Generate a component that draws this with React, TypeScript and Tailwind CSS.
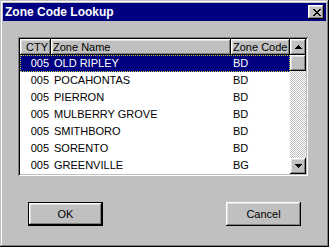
import React from "react";

const rows: [string, string, string][] = [
  ["005", "OLD RIPLEY", "BD"],
  ["005", "POCAHONTAS", "BD"],
  ["005", "PIERRON", "BD"],
  ["005", "MULBERRY GROVE", "BD"],
  ["005", "SMITHBORO", "BD"],
  ["005", "SORENTO", "BD"],
  ["005", "GREENVILLE", "BG"],
];

const raised =
  "bg-[#c0c0c0] shadow-[inset_-1px_-1px_0_#000,inset_1px_1px_0_#fff,inset_-2px_-2px_0_#808080,inset_2px_2px_0_#dfdfdf]";

function Arrow({ up }: { up: boolean }) {
  return (
    <svg width="7" height="4" viewBox="0 0 7 4" shapeRendering="crispEdges">
      {up ? (
        <>
          <rect x="3" y="0" width="1" height="1" fill="#000" />
          <rect x="2" y="1" width="3" height="1" fill="#000" />
          <rect x="1" y="2" width="5" height="1" fill="#000" />
          <rect x="0" y="3" width="7" height="1" fill="#000" />
        </>
      ) : (
        <>
          <rect x="0" y="0" width="7" height="1" fill="#000" />
          <rect x="1" y="1" width="5" height="1" fill="#000" />
          <rect x="2" y="2" width="3" height="1" fill="#000" />
          <rect x="3" y="3" width="1" height="1" fill="#000" />
        </>
      )}
    </svg>
  );
}

function CloseGlyph() {
  const px: [number, number, number][] = [
    [0, 0, 2], [6, 0, 2],
    [1, 1, 2], [5, 1, 2],
    [2, 2, 4],
    [3, 3, 2],
    [2, 4, 4],
    [1, 5, 2], [5, 5, 2],
    [0, 6, 2], [6, 6, 2],
  ];
  return (
    <svg width="8" height="7" viewBox="0 0 8 7" shapeRendering="crispEdges">
      {px.map(([x, y, w], i) => (
        <rect key={i} x={x} y={y} width={w} height="1" fill="#000" />
      ))}
    </svg>
  );
}

export default function App() {
  return (
    <div
      className="w-[329px] h-[247px] bg-[#c0c0c0] p-[3px] flex flex-col shadow-[inset_-1px_-1px_0_#000,inset_1px_1px_0_#c0c0c0,inset_-2px_-2px_0_#808080,inset_2px_2px_0_#fff] text-black"
      style={{ fontFamily: "'Liberation Sans', Arial, sans-serif" }}
    >
      {/* Title bar */}
      <div className="h-[18px] bg-[#000080] flex items-center justify-between pl-[2px] pr-[2px]">
        <span className="text-white font-bold text-[12px] leading-none">Zone Code Lookup</span>
        <div className={`w-[16px] h-[14px] flex items-center justify-center pl-[1px] ${raised}`}>
          <CloseGlyph />
        </div>
      </div>

      {/* Body */}
      <div className="flex flex-col px-[15px] pt-[16px]">
        {/* List view */}
        <div className="w-[290px] h-[139px] p-[2px] bg-white shadow-[inset_1px_1px_0_#808080,inset_-1px_-1px_0_#fff,inset_2px_2px_0_#000,inset_-2px_-2px_0_#c0c0c0] flex">
          <div className="w-[270px] flex flex-col overflow-hidden text-[11px] leading-none">
            <div className="flex h-[16px] shrink-0">
              <div className={`w-[31px] flex items-center justify-end pr-[3px] ${raised}`}>CTY</div>
              <div className={`w-[180px] flex items-center pl-[2px] ${raised}`}>Zone Name</div>
              <div className={`w-[59px] flex items-center pl-[2px] ${raised}`}>Zone Code</div>
            </div>
            {rows.map(([cty, name, code], i) => {
              const sel = i === 0;
              return (
                <div
                  key={i}
                  className={`flex h-[17px] shrink-0 items-center ${
                    sel ? "bg-[#000080] text-white border border-dotted border-[#c8c850]" : ""
                  }`}
                >
                  <div className={`${sel ? "w-[30px]" : "w-[31px]"} text-right pr-[2px]`}>{cty}</div>
                  <div className="w-[180px] pl-[3px]">{name}</div>
                  <div className="w-[58px] pl-[2px]">{code}</div>
                </div>
              );
            })}
          </div>
          {/* Scrollbar */}
          <div className="w-[16px] flex flex-col">
            <div className={`h-[16px] flex items-center justify-center ${raised}`}>
              <Arrow up />
            </div>
            <div className={`h-[16px] ${raised}`} />
            <div className="flex-1 bg-[repeating-conic-gradient(#c0c0c0_0_25%,#ffffff_0_50%)] bg-[length:2px_2px]" />
            <div className={`h-[16px] flex items-center justify-center ${raised}`}>
              <Arrow up={false} />
            </div>
          </div>
        </div>

        {/* Buttons */}
        <div className="flex justify-between px-[10px] mt-[26px] text-[11px]">
          <div className="w-[75px] h-[24px] border border-black">
            <div className={`w-full h-full flex items-center justify-center ${raised}`}>OK</div>
          </div>
          <div className={`w-[75px] h-[24px] flex items-center justify-center ${raised}`}>Cancel</div>
        </div>
      </div>
    </div>
  );
}
